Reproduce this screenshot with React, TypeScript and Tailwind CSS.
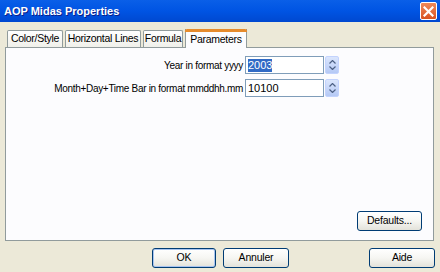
import React from "react";

const font = "font-['Tahoma','Liberation_Sans',Arial,sans-serif]";

function Spinner() {
  return (
    <div className="w-[14px] h-[18px] ml-[1px] rounded-[2px] bg-gradient-to-b from-[#dbe6fd] to-[#b5c9f5] border border-[#c3d3fd] flex flex-col items-center justify-center gap-[2px]">
      <svg width="7" height="4" viewBox="0 0 7 4">
        <path d="M0.5 3.5 L3.5 0.5 L6.5 3.5" fill="none" stroke="#4d6185" strokeWidth="1.2" />
      </svg>
      <svg width="7" height="4" viewBox="0 0 7 4">
        <path d="M0.5 0.5 L3.5 3.5 L6.5 0.5" fill="none" stroke="#4d6185" strokeWidth="1.2" />
      </svg>
    </div>
  );
}

function Field({ label, value, selected }: { label: string; value: string; selected?: boolean }) {
  return (
    <div className="flex items-center h-[18px]">
      <div className="w-[238px] text-right pr-[1px] text-[10px] text-black tracking-[-0.3px] whitespace-nowrap">{label}</div>
      <div className="w-[79px] h-[18px] ml-[1px] border border-[#7f9db9] bg-white flex items-center px-[2px]">
        {selected ? (
          <span className="bg-[#316ac5] text-white text-[11px] leading-[13px]">{value}</span>
        ) : (
          <span className="text-black text-[11px] leading-[13px]">{value}</span>
        )}
      </div>
      <Spinner />
    </div>
  );
}

function Btn({ label, w, focus }: { label: string; w: string; focus?: boolean }) {
  return (
    <div className={`${w} h-[20px] rounded-[3px] border border-[#003c74] bg-gradient-to-b from-white via-[#f6f6f2] to-[#e3e2da] flex items-center justify-center text-[10.5px] tracking-[-0.2px] text-black ${focus ? "shadow-[inset_0_0_0_1px_#a8c4ef]" : ""}`}>
      {label}
    </div>
  );
}

function Tab({ label, w, active }: { label: string; w: string; active?: boolean }) {
  if (active) {
    return (
      <div className={`${w} h-[19px] -mb-[1px] relative z-10 bg-[#fcfcfe] border border-b-0 border-[#919b9c] border-t-0 flex flex-col`}>
        <div className="h-[3px] bg-[#e68b2c] rounded-t-[2px] -mx-[1px]" />
        <div className="flex-1 flex items-center justify-center text-[10.5px] tracking-[-0.3px] text-black whitespace-nowrap">{label}</div>
      </div>
    );
  }
  return (
    <div className={`${w} h-[17px] mt-[2px] rounded-t-[2px] border border-b-0 border-[#919b9c] bg-gradient-to-b from-white to-[#f0f0ea] flex items-center justify-center text-[10.5px] tracking-[-0.3px] text-black whitespace-nowrap`}>
      {label}
    </div>
  );
}

export default function App() {
  return (
    <div className={`w-[440px] h-[272px] bg-[#ece9d8] flex flex-col overflow-hidden ${font}`}>
      <div className="h-[22px] bg-gradient-to-b from-[#0a5fe8] via-[#0054e3] to-[#0048d0] flex items-center pl-[4px] pr-[3px]">
        <div className="flex-1 text-white font-bold text-[11px] [text-shadow:1px_1px_0_#0a1e8a]">AOP Midas Properties</div>
        <div className="w-[17px] h-[18px] rounded-[2px] border border-white bg-gradient-to-b from-[#ee8a5a] to-[#d9521f] flex items-center justify-center">
          <svg width="11" height="11" viewBox="0 0 11 11">
            <path d="M1.5 1.5 L9.5 9.5 M9.5 1.5 L1.5 9.5" stroke="white" strokeWidth="2.2" strokeLinecap="square" />
          </svg>
        </div>
      </div>

      <div className="flex items-end gap-[2px] pl-[7px] mt-[7px] h-[18px]">
        <Tab label="Color/Style" w="w-[56px]" />
        <Tab label="Horizontal Lines" w="w-[76px]" />
        <Tab label="Formula" w="w-[40px]" />
        <Tab label="Parameters" w="w-[62px]" active />
      </div>

      <div className="ml-[5px] mr-[6px] h-[194px] border border-[#919b9c] bg-[#fcfcfe] flex flex-col pt-[8px] pb-[9px] pr-[11px]">
        <div className="flex flex-col gap-[5px]">
          <Field label="Year in format yyyy" value="2003" selected />
          <Field label="Month+Day+Time Bar in format mmddhh.mm" value="10100" />
        </div>
        <div className="flex-1" />
        <div className="flex justify-end">
          <Btn label="Defaults..." w="w-[65px]" />
        </div>
      </div>

      <div className="flex items-center mt-[7px] pl-[152px] pr-[5px]">
        <Btn label="OK" w="w-[64px]" focus />
        <div className="w-[7px]" />
        <Btn label="Annuler" w="w-[66px]" />
        <div className="flex-1" />
        <Btn label="Aide" w="w-[66px]" />
      </div>
    </div>
  );
}
